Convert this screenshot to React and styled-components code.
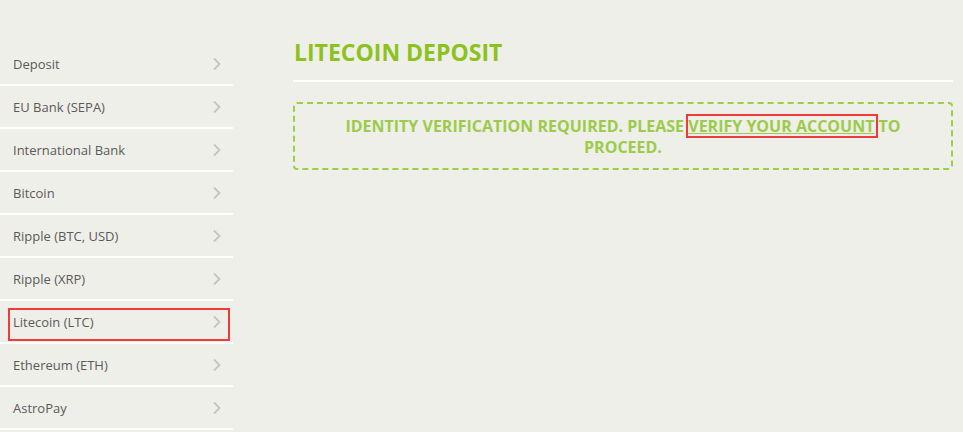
import React from 'react';
import styled, { createGlobalStyle } from 'styled-components';

const GlobalStyle = createGlobalStyle`
  html, body {
    margin: 0;
    padding: 0;
    background: #efefea;
    font-family: "Open Sans", "Liberation Sans", sans-serif;
  }
`;

const methods = [
  'Deposit',
  'EU Bank (SEPA)',
  'International Bank',
  'Bitcoin',
  'Ripple (BTC, USD)',
  'Ripple (XRP)',
  'Litecoin (LTC)',
  'Ethereum (ETH)',
  'AstroPay',
];

const Chevron = () => (
  <svg width="10" height="14" viewBox="0 0 10 14" fill="none">
    <path d="M2 1.5 L7.5 7 L2 12.5" stroke="#c4c4c1" strokeWidth="1.8" />
  </svg>
);

const App = () => {
  return (
    <>
      <GlobalStyle />
      <Page>
        <Sidebar>
          {methods.map((m) => (
            <MenuItem key={m} $marked={m === 'Litecoin (LTC)'}>
              <span>{m}</span>
              <Chevron />
            </MenuItem>
          ))}
        </Sidebar>

        <Main>
          <Title>LITECOIN DEPOSIT</Title>
          <Notice>
            IDENTITY VERIFICATION REQUIRED. PLEASE{' '}
            <VerifyLink href="#">VERIFY YOUR ACCOUNT</VerifyLink> TO PROCEED.
          </Notice>
        </Main>
      </Page>
    </>
  );
};

const Page = styled.div`
  display: flex;
  gap: 60px;
  width: 963px;
  height: 432px;
  overflow: hidden;
`;

const Sidebar = styled.ul`
  list-style: none;
  margin: 0;
  padding: 43px 0 0 0;
  width: 233px;
  flex-shrink: 0;
`;

const MenuItem = styled.li`
  position: relative;
  display: flex;
  align-items: center;
  justify-content: space-between;
  box-sizing: border-box;
  height: 43px;
  padding: 1px 11px 0 13px;
  border-bottom: 2px solid #ffffff;
  font-size: 13px;
  color: #5a5a5a;
  cursor: pointer;

  &::after {
    content: ${(p) => (p.$marked ? '""' : 'none')};
    position: absolute;
    left: 8px;
    right: 3px;
    top: 7px;
    bottom: 1px;
    border: 2px solid #f23a3a;
  }
`;

const Main = styled.div`
  width: 660px;
  padding-top: 35px;
`;

const Title = styled.h1`
  margin: 0;
  padding: 0 0 11px 1px;
  font-size: 23px;
  line-height: 34px;
  font-weight: 700;
  color: #8cc21e;
  border-bottom: 2px solid #ffffff;
`;

const Notice = styled.div`
  margin-top: 20px;
  padding: 12px 40px 10px;
  border: 2px dashed #9ccf46;
  border-radius: 4px;
  text-align: center;
  font-size: 16px;
  line-height: 21px;
  font-weight: 700;
  color: #9ccb4a;
`;

const VerifyLink = styled.a`
  position: relative;
  color: #9ccb4a;
  text-decoration: underline;

  &::after {
    content: "";
    position: absolute;
    left: -2px;
    right: -4px;
    top: -1px;
    bottom: -1px;
    border: 2px solid #f23a3a;
    pointer-events: none;
  }
`;

export default App;
